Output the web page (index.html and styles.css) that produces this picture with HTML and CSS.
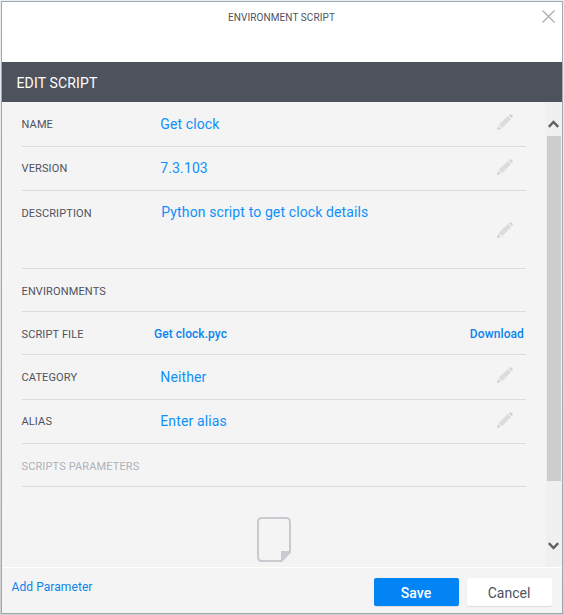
FILE: index.html
```html
<!DOCTYPE html>
<html lang="en">
<head>
<meta charset="utf-8">
<title>Environment Script</title>
<link rel="stylesheet" href="styles.css">
</head>
<body>
<svg class="defs" width="0" height="0" aria-hidden="true">
  <symbol id="pencil" viewBox="0 0 16 16">
    <path d="M0 16 1.3 11.8 4.2 14.7Z" fill="#cdcdcd"/>
    <path d="M1.8 10.9 11.2 2 14 4.8 5 14.1Z" fill="#dedede"/>
    <path d="M1.8 10.9 11.2 2M3.4 12.5 12.6 3.4M5 14.1 14 4.8" stroke="#cbcbcb" stroke-width=".6" fill="none" stroke-dasharray="1 .6"/>
    <path d="M12 1.2 12.8.5Q13.6-.1 14.5.7L15.4 1.6Q16.1 2.5 15.5 3.3L14.8 4Z" fill="#cfcfcf"/>
    <path d="M1.2 12.3 3.7 14.8" stroke="#f4f4f4" stroke-width=".7"/>
  </symbol>
</svg>
<main class="dialog">
  <header class="header">
    <h1 class="title">ENVIRONMENT SCRIPT</h1>
    <svg class="close" width="13" height="13" viewBox="0 0 13 13"><path d="M.5.5 12.5 12.5M12.5.5.5 12.5" stroke="#a5a8ad" stroke-width="1.1"/></svg>
  </header>
  <h2 class="bar">EDIT SCRIPT</h2>
  <div class="body">
    <div class="form">
      <div class="row h45"><span class="label">NAME</span><span class="value">Get clock</span><svg class="pencil"><use href="#pencil"/></svg></div>
      <div class="row h44"><span class="label">VERSION</span><span class="value">7.3.103</span><svg class="pencil"><use href="#pencil"/></svg></div>
      <div class="row description"><span class="label">DESCRIPTION</span><span class="value">Python script to get clock details</span><svg class="pencil"><use href="#pencil"/></svg></div>
      <div class="row"><span class="label">ENVIRONMENTS</span></div>
      <div class="row"><span class="label">SCRIPT FILE</span><span class="file">Get clock.pyc</span><span class="download">Download</span></div>
      <div class="row h45"><span class="label">CATEGORY</span><span class="value">Neither</span><svg class="pencil"><use href="#pencil"/></svg></div>
      <div class="row h44"><span class="label">ALIAS</span><span class="value">Enter alias</span><svg class="pencil"><use href="#pencil"/></svg></div>
      <div class="row"><span class="label muted">SCRIPTS PARAMETERS</span></div>
      <svg class="page" width="34" height="45" viewBox="0 0 34 45"><path d="M24 44H5Q1 44 1 40V5Q1 1 5 1H29Q33 1 33 5V35" fill="none" stroke="#c7cbd0" stroke-width="2"/><path d="M24 34H34V35.5L25 45H24Z" fill="#c7cbd0"/></svg>
    </div>
    <div class="scrollbar">
      <svg class="arrow" width="11" height="8" viewBox="0 0 11 8"><path d="M.8 6.8 5.5 2 10.2 6.8" fill="none" stroke="#606060" stroke-width="2.4"/></svg>
      <div class="thumb"></div>
      <svg class="arrow down" width="11" height="8" viewBox="0 0 11 8"><path d="M.8 1.2 5.5 6 10.2 1.2" fill="none" stroke="#606060" stroke-width="2.4"/></svg>
    </div>
  </div>
  <footer class="footer">
    <span class="add">Add Parameter</span>
    <button class="btn save">Save</button>
    <button class="btn cancel">Cancel</button>
  </footer>
</main>
</body>
</html>
```

FILE: styles.css
```css
* { box-sizing: border-box; }
body {
  margin: 0;
  padding: 1px;
  height: 615px;
  overflow: hidden;
  background: linear-gradient(#e9eff3, #d9dcdd 70%, #cfd0d1);
  font-family: Roboto, "Liberation Sans", sans-serif;
  color: #4e525d;
}
.defs { position: absolute; }
.dialog {
  display: flex;
  flex-direction: column;
  width: 562px;
  height: 613px;
  border: 1px solid #a2a7ab;
  background: #f4f4f4;
}
.header {
  display: grid;
  grid-template-columns: 1fr auto 1fr;
  align-items: start;
  height: 60px;
  padding: 8px 7px 0 6px;
  background: #fff;
}
.title {
  grid-column: 2;
  margin: 0;
  font-size: 10px;
  line-height: 15px;
  font-weight: 400;
  letter-spacing: .09px;
}
.close { justify-self: end; }
.bar {
  height: 40px;
  margin: 0;
  padding-left: 14.5px;
  background: #4e525d;
  color: #fff;
  font-size: 14px;
  line-height: 42px;
  font-weight: 400;
  letter-spacing: .15px;
}
.body { display: flex; height: 465px; }
.form {
  display: flex;
  flex-direction: column;
  width: 544px;
  padding: 0 20px;
}
.row {
  display: flex;
  align-items: center;
  height: 43px;
  padding-top: 2px;
  border-bottom: 1px solid #dbdbdb;
  white-space: nowrap;
}
.h45 { height: 45px; padding-top: 0; }
.h44 { height: 44px; padding-top: 0; }
.label {
  width: 138px;
  padding-top: 2px;
  font-size: 11px;
  line-height: 16px;
  letter-spacing: .13px;
  text-indent: -.5px;
}
.h44 .label { padding-top: 0; }
.muted { color: #aeb2b9; }
.value {
  color: #0f90fb;
  font-size: 14px;
  line-height: 20px;
  letter-spacing: .12px;
  text-indent: .3px;
}
.h44 .value { margin-top: -2px; }
.description { height: 78px; align-items: flex-start; padding-top: 11px; }
.description .label { margin-top: 2px; }
.description .value { margin-left: 1px; }
.pencil {
  width: 16px;
  height: 16px;
  margin: 0 13px 4px auto;
}
.description .pencil { margin-top: 20px; }
.file, .download {
  color: #0984ec;
  font-size: 12px;
  font-weight: 500;
}
.file { margin-left: -6px; margin-right: auto; letter-spacing: .05px; }
.download { margin-right: 2px; letter-spacing: .1px; }
.page { align-self: center; margin-top: 30px; }
.scrollbar {
  display: flex;
  flex-direction: column;
  align-items: center;
  width: 16px;
  padding: 18px 0 17px;
  background: #f0f0f0;
}
.thumb { width: 14px; height: 345px; margin-top: 8px; background: #cdcdcd; }
.arrow { margin-right: 2px; }
.arrow.down { margin-top: auto; }
.footer {
  display: flex;
  height: 46px;
  padding: 10px 10px 0 9.5px;
  border-top: 1px solid #fff;
}
.add {
  margin-right: auto;
  color: #0984ec;
  font-size: 12px;
  line-height: 19px;
  letter-spacing: .08px;
}
.btn {
  width: 85px;
  height: 28px;
  margin-left: 8px;
  padding: 2px 1px 0 0;
  border: 0;
  border-radius: 2px;
  font: 400 14px/26px Roboto, sans-serif;
  box-shadow: 0 1px 1px #0000001a;
}
.save { background: #0284f5; color: #fff; font-weight: 500; }
.cancel { background: #fff; color: #4e525d; }
```
